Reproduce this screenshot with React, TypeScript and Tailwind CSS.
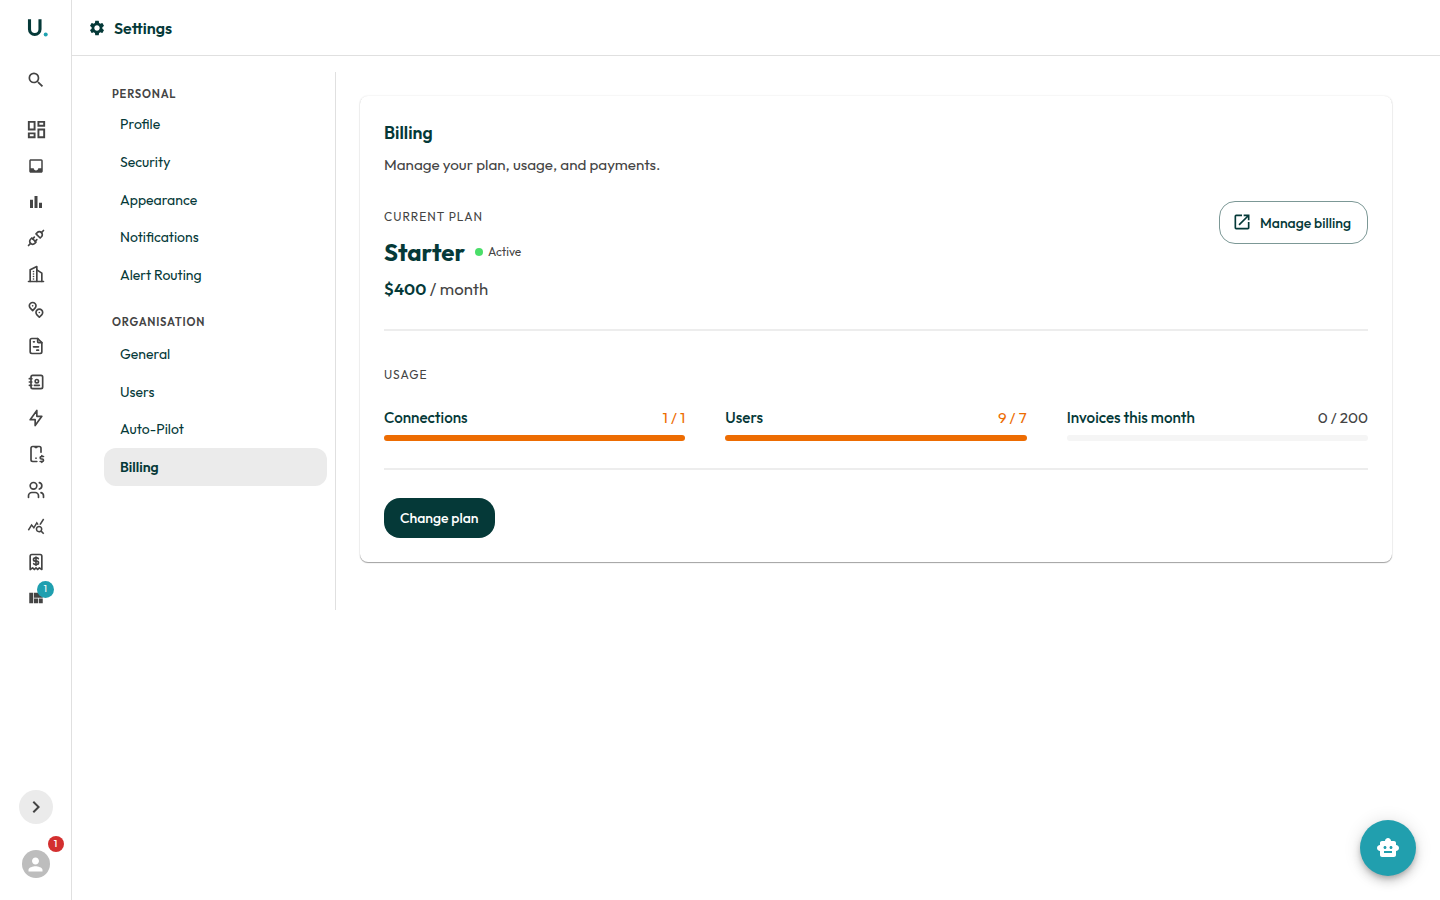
import React from "react";
import {
  MdBarChart, MdChevronRight, MdInbox, MdOpenInNew, MdOutlineDashboard, MdPerson,
  MdQueryStats, MdSearch, MdSettings, MdSmartToy, MdViewQuilt,
} from "react-icons/md";
import {
  TbAddressBook, TbBolt, TbBuildingSkyscraper, TbDeviceMobileDollar, TbFileInvoice,
  TbMapPins, TbPlugConnected, TbReceiptDollar, TbUsers,
} from "react-icons/tb";

const railIcons = [
  <MdOutlineDashboard size={23} />,
  <MdInbox size={18} />,
  <MdBarChart size={18} />,
  <TbPlugConnected size={20} />,
  <TbBuildingSkyscraper size={20} />,
  <TbMapPins size={20} />,
  <TbFileInvoice size={20} />,
  <TbAddressBook size={20} />,
  <TbBolt size={20} />,
  <TbDeviceMobileDollar size={20} />,
  <TbUsers size={20} />,
  <MdQueryStats size={18} />,
  <TbReceiptDollar size={20} />,
  <MdViewQuilt size={18} />,
];

const personal = ["Profile", "Security", "Appearance", "Notifications", "Alert Routing"];
const organisation = ["General", "Users", "Auto-Pilot", "Billing"];

function Rail() {
  return (
    <aside className="flex w-[72px] shrink-0 flex-col items-center border-r border-[#e0e0e0] text-[#444]">
      <div className="flex h-14 w-full items-center pl-[27px]">
        <svg width="22" height="20" viewBox="0 0 22 20" fill="none">
          <path d="M2.5 1.2v10.1a5.25 5.25 0 0 0 10.5 0V1.2" stroke="#053938" strokeWidth="3.1" />
          <circle cx="18.7" cy="16.5" r="2" fill="#1fa2b0" />
        </svg>
      </div>
      <div className="flex h-12 items-center"><MdSearch size={20} /></div>
      <nav className="mt-2 flex flex-col">
        {railIcons.map((icon, i) => (
          <div key={i} className="relative flex h-9 w-[72px] items-center justify-center pb-[0.5px] pl-px">
            {icon}
            {i === 13 && (
              <span className="absolute left-[37.5px] top-[1px] flex size-[16.5px] items-center justify-center rounded-full bg-[#1f9faf] text-[10px] leading-none text-white">1</span>
            )}
          </div>
        ))}
      </nav>
      <div className="mt-auto flex size-[34px] items-center justify-center rounded-full bg-[#ebebeb]">
        <MdChevronRight size={24} />
      </div>
      <div className="relative mb-[22px] mt-[26px] flex size-7 items-center justify-center rounded-full bg-[#bdbdbd] text-white">
        <MdPerson size={21} />
        <span className="absolute -top-[14px] left-[26px] flex size-4 items-center justify-center rounded-full bg-[#d32f2f] text-[10px] font-medium leading-none">1</span>
      </div>
    </aside>
  );
}

function MenuGroup({ title, items, titleCls }: { title: string; items: string[]; titleCls: string }) {
  return (
    <section>
      <h2 className={"pl-2 text-[11.2px] font-semibold leading-4 tracking-[0.8px] text-[#444] " + titleCls}>{title}</h2>
      {items.map((it) => (
        <div
          key={it}
          className={"flex h-[37.6px] items-center rounded-xl pl-4 text-sm " + (it === "Billing" ? "bg-[#ebebeb] font-semibold" : "")}
        >
          {it}
        </div>
      ))}
    </section>
  );
}

function Usage({ label, value, over }: { label: string; value: string; over: boolean }) {
  return (
    <div>
      <div className="flex h-6 items-center justify-between text-[15.2px]">
        <span className="font-medium">{label}</span>
        <span className={over ? "text-[#ed6c02]" : "text-[#444]"}>{value}</span>
      </div>
      <div className={"mt-[4.4px] h-1.5 rounded-full " + (over ? "bg-[#ed6c02]" : "bg-[#f5f5f5]")} />
    </div>
  );
}

export default function App() {
  return (
    <div className="flex h-[900px] w-[1440px] overflow-hidden bg-white font-['Outfit','Lato','Liberation_Sans',sans-serif] text-[#053938]">
      <Rail />
      <div className="flex min-w-0 flex-1 flex-col">
        <header className="flex h-14 shrink-0 items-center gap-2 border-b border-[#e0e0e0] pl-4">
          <MdSettings size={18} />
          <h1 className="text-base font-semibold">Settings</h1>
        </header>
        <div className="flex items-start pt-4">
          <div className="flex h-[538px] w-[264px] shrink-0 flex-col border-r border-[#e0e0e0] pl-8 pr-2">
            <MenuGroup title="PERSONAL" items={personal} titleCls="pb-[4.1px] pt-[13.6px]" />
            <MenuGroup title="ORGANISATION" items={organisation} titleCls="pb-[4.8px] pt-[20.8px]" />
          </div>
          <main className="ml-6 mt-6 flex h-[466px] w-[1032px] flex-col rounded-lg bg-white px-6 shadow-[0_1px_1px_rgba(0,0,0,0.35),0_0_2px_rgba(0,0,0,0.12)]">
            <h2 className="mt-[25px] h-6 text-[17.6px] font-semibold leading-6">Billing</h2>
            <p className="mt-2 h-6 text-[15.2px] leading-6 text-[#444]">Manage your plan, usage, and payments.</p>
            <div className="mt-6 flex h-[104px] items-start justify-between">
              <div>
                <div className="mt-[7px] h-[18px] text-xs leading-[18px] tracking-[1px] text-[#444]">CURRENT PLAN</div>
                <div className="mt-[8px] flex h-9 items-center">
                  <span className="w-[91px] text-2xl font-bold">Starter</span>
                  <span className="mr-[5px] size-2 rounded-full bg-[#4ade69]" />
                  <span className="text-xs text-[#444]">Active</span>
                </div>
                <p className="mt-[7px] h-6 text-[16.8px] leading-6 text-[#444]">
                  <span className="font-semibold text-[#053938]">$400</span> / month
                </p>
              </div>
              <button className="flex h-[42.5px] w-[149px] items-center rounded-2xl border border-[#7c9896] pl-3">
                <MdOpenInNew size={20} />
                <span className="ml-2 pt-px text-sm font-medium">Manage billing</span>
              </button>
            </div>
            <div className="mt-[24px] h-0.5 bg-[#ededed]" />
            <div className="mt-[35px] h-[18px] text-xs leading-[18px] tracking-[1px] text-[#444]">USAGE</div>
            <div className="mt-[22.4px] grid grid-cols-3 gap-10">
              <Usage label="Connections" value="1 / 1" over />
              <Usage label="Users" value="9 / 7" over />
              <Usage label="Invoices this month" value="0 / 200" over={false} />
            </div>
            <div className="mt-[27.2px] h-0.5 shrink-0 bg-[#ededed]" />
            <button className="mt-[27.6px] h-[40.5px] w-[110.5px] shrink-0 rounded-2xl bg-[#053938] text-sm font-medium text-white">Change plan</button>
          </main>
        </div>
      </div>
      <button className="absolute left-[1360px] top-[820px] flex size-14 items-center justify-center rounded-full bg-[#219fae] text-white shadow-[0_3px_5px_-1px_rgba(0,0,0,0.2),0_6px_10px_rgba(0,0,0,0.14),0_1px_18px_rgba(0,0,0,0.12)]">
        <MdSmartToy size={24} />
      </button>
    </div>
  );
}
